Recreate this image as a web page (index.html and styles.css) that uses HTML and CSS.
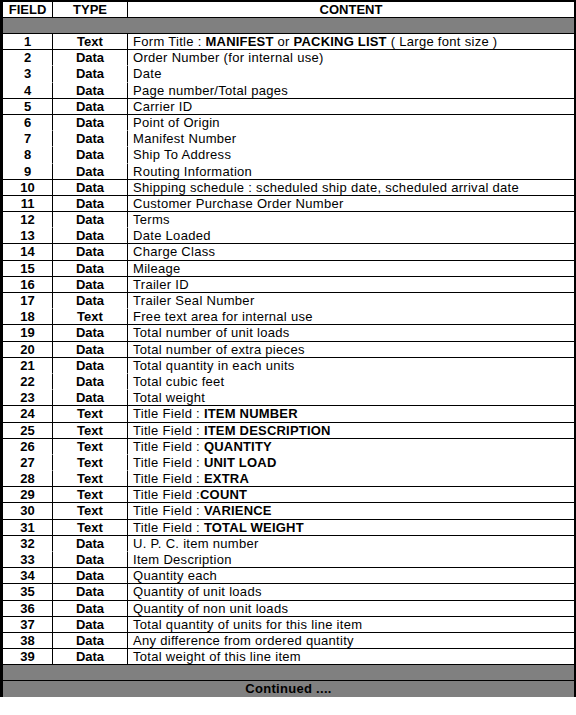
FILE: index.html
```html
<!DOCTYPE html>
<html>
<head>
<meta charset="utf-8">
<link rel="stylesheet" href="styles.css">
</head>
<body>
<div class="sheet">
  <div class="row head ln"><div class="c f">FIELD</div><div class="c t">TYPE</div><div class="c x hx">CONTENT</div></div>
  <div class="band ln"></div>
  <div class="row ln"><div class="c f">1</div><div class="c t">Text</div><div class="c x">Form Title : <b>MANIFEST</b> or <b>PACKING LIST</b> ( Large font size )</div></div>
  <div class="row"><div class="c f">2</div><div class="c t">Data</div><div class="c x">Order Number (for internal use)</div></div>
  <div class="row"><div class="c f">3</div><div class="c t">Data</div><div class="c x">Date</div></div>
  <div class="row ln"><div class="c f">4</div><div class="c t">Data</div><div class="c x">Page number/Total pages</div></div>
  <div class="row ln"><div class="c f">5</div><div class="c t">Data</div><div class="c x">Carrier ID</div></div>
  <div class="row"><div class="c f">6</div><div class="c t">Data</div><div class="c x">Point of Origin</div></div>
  <div class="row"><div class="c f">7</div><div class="c t">Data</div><div class="c x">Manifest Number</div></div>
  <div class="row"><div class="c f">8</div><div class="c t">Data</div><div class="c x">Ship To Address</div></div>
  <div class="row ln"><div class="c f">9</div><div class="c t">Data</div><div class="c x">Routing Information</div></div>
  <div class="row ln"><div class="c f">10</div><div class="c t">Data</div><div class="c x">Shipping schedule : scheduled ship date, scheduled arrival date</div></div>
  <div class="row ln"><div class="c f">11</div><div class="c t">Data</div><div class="c x">Customer Purchase Order Number</div></div>
  <div class="row"><div class="c f">12</div><div class="c t">Data</div><div class="c x">Terms</div></div>
  <div class="row ln"><div class="c f">13</div><div class="c t">Data</div><div class="c x">Date Loaded</div></div>
  <div class="row ln"><div class="c f">14</div><div class="c t">Data</div><div class="c x">Charge Class</div></div>
  <div class="row ln"><div class="c f">15</div><div class="c t">Data</div><div class="c x">Mileage</div></div>
  <div class="row ln"><div class="c f">16</div><div class="c t">Data</div><div class="c x">Trailer ID</div></div>
  <div class="row"><div class="c f">17</div><div class="c t">Data</div><div class="c x">Trailer Seal Number</div></div>
  <div class="row ln"><div class="c f">18</div><div class="c t">Text</div><div class="c x">Free text area for internal use</div></div>
  <div class="row ln"><div class="c f">19</div><div class="c t">Data</div><div class="c x">Total number of unit loads</div></div>
  <div class="row ln"><div class="c f">20</div><div class="c t">Data</div><div class="c x">Total number of extra pieces</div></div>
  <div class="row"><div class="c f">21</div><div class="c t">Data</div><div class="c x">Total quantity in each units</div></div>
  <div class="row"><div class="c f">22</div><div class="c t">Data</div><div class="c x">Total cubic feet</div></div>
  <div class="row ln"><div class="c f">23</div><div class="c t">Data</div><div class="c x">Total weight</div></div>
  <div class="row ln"><div class="c f">24</div><div class="c t">Text</div><div class="c x">Title Field : <b>ITEM NUMBER</b></div></div>
  <div class="row ln"><div class="c f">25</div><div class="c t">Text</div><div class="c x">Title Field : <b>ITEM DESCRIPTION</b></div></div>
  <div class="row"><div class="c f">26</div><div class="c t">Text</div><div class="c x">Title Field : <b>QUANTITY</b></div></div>
  <div class="row"><div class="c f">27</div><div class="c t">Text</div><div class="c x">Title Field : <b>UNIT LOAD</b></div></div>
  <div class="row ln"><div class="c f">28</div><div class="c t">Text</div><div class="c x">Title Field : <b>EXTRA</b></div></div>
  <div class="row ln"><div class="c f">29</div><div class="c t">Text</div><div class="c x">Title Field :<b>COUNT</b></div></div>
  <div class="row ln"><div class="c f">30</div><div class="c t">Text</div><div class="c x">Title Field : <b>VARIENCE</b></div></div>
  <div class="row ln"><div class="c f">31</div><div class="c t">Text</div><div class="c x">Title Field : <b>TOTAL WEIGHT</b></div></div>
  <div class="row"><div class="c f">32</div><div class="c t">Data</div><div class="c x">U. P. C. item number</div></div>
  <div class="row ln"><div class="c f">33</div><div class="c t">Data</div><div class="c x">Item Description</div></div>
  <div class="row ln"><div class="c f">34</div><div class="c t">Data</div><div class="c x">Quantity each</div></div>
  <div class="row ln"><div class="c f">35</div><div class="c t">Data</div><div class="c x">Quantity of unit loads</div></div>
  <div class="row ln"><div class="c f">36</div><div class="c t">Data</div><div class="c x">Quantity of non unit loads</div></div>
  <div class="row ln"><div class="c f">37</div><div class="c t">Data</div><div class="c x">Total quantity of units for this line item</div></div>
  <div class="row ln"><div class="c f">38</div><div class="c t">Data</div><div class="c x">Any difference from ordered quantity</div></div>
  <div class="row ln"><div class="c f">39</div><div class="c t">Data</div><div class="c x">Total weight of this line item</div></div>
  <div class="band ln"></div>
  <div class="band foot">Continued ....</div>
</div>
</body>
</html>
```

FILE: styles.css
```css
html, body {
  margin: 0;
  padding: 0;
  background: #fff;
}
body {
  font-family: "Liberation Sans", Arial, sans-serif;
  font-size: 13px;
  color: #000;
}
.sheet {
  width: 576px;
  box-sizing: border-box;
  border-top: 2px solid #000;
  border-left: 3px solid #000;
  border-right: 2px solid #000;
}
.row {
  display: grid;
  grid-template-columns: 50px 75px 446px;
  height: 16.2px;
}
.row.head {
  height: 16px;
}
.c {
  box-sizing: border-box;
  height: 100%;
  line-height: 15px;
  white-space: nowrap;
  overflow: hidden;
  border-bottom: 1px solid transparent;
}
.row.ln > .c {
  border-bottom-color: #000;
}
.f, .t {
  border-right: 1px solid #000;
  text-align: center;
  font-weight: bold;
}
.x {
  padding-left: 5px;
  letter-spacing: 0.3px;
}
.x b {
  letter-spacing: 0.2px;
}
.head .c {
  font-weight: bold;
  line-height: 16px;
}
.head .hx {
  text-align: center;
  padding-left: 0;
  letter-spacing: 0;
}
.band {
  box-sizing: border-box;
  height: 16px;
  background: #808080;
}
.band.ln {
  border-bottom: 1px solid #000;
}
.foot {
  text-align: center;
  font-weight: bold;
  line-height: 16px;
  letter-spacing: 0.3px;
}
```
